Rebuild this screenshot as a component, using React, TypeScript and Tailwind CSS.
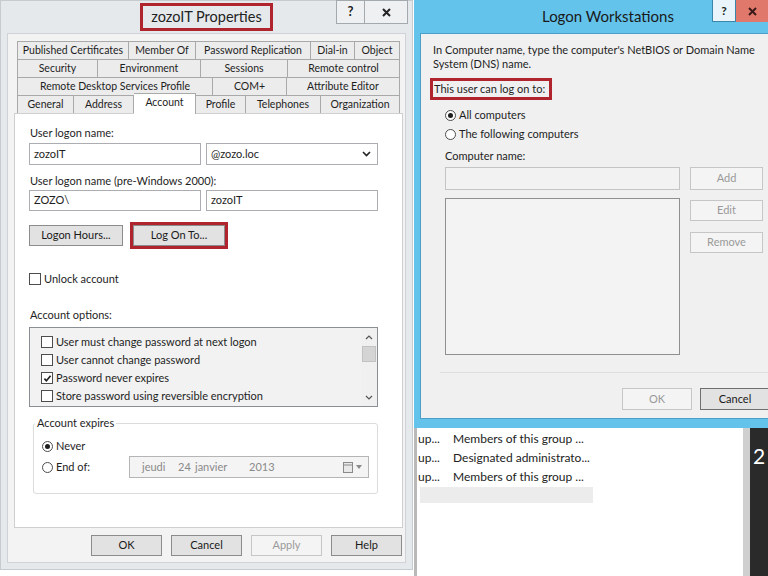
import React from "react";

const tabRows: [string, number][][] = [
  [["Published Certificates", 112], ["Member Of", 67], ["Password Replication", 115], ["Dial-in", 44], ["Object", 45]],
  [["Security", 81], ["Environment", 103], ["Sessions", 87], ["Remote control", 112]],
  [["Remote Desktop Services Profile", 196], ["COM+", 74], ["Attribute Editor", 113]],
  [["General", 57], ["Address", 60], ["Account", 62], ["Profile", 50], ["Telephones", 75], ["Organization", 79]],
];

const accountOptions = [
  { label: "User must change password at next logon", checked: false },
  { label: "User cannot change password", checked: false },
  { label: "Password never expires", checked: true },
  { label: "Store password using reversible encryption", checked: false },
];

const groupRows = ["Members of this group ...", "Designated administrato...", "Members of this group ..."];

function Check({ checked }: { checked?: boolean }) {
  return (
    <span className="w-[12px] h-[12px] border border-[#4d4d4d] bg-white flex items-center justify-center shrink-0">
      {checked && (
        <svg width="9" height="9" viewBox="0 0 9 9">
          <path d="M1.4 4.6 L3.4 6.8 L7.6 1.8" fill="none" stroke="#1e1e1e" strokeWidth="1.6" />
        </svg>
      )}
    </span>
  );
}

function Radio({ checked }: { checked?: boolean }) {
  return (
    <span className="w-[11px] h-[11px] rounded-full border border-[#4d4d4d] bg-white flex items-center justify-center shrink-0">
      {checked && <span className="w-[5px] h-[5px] rounded-full bg-[#1e1e1e]" />}
    </span>
  );
}

function Btn({ label, className = "", disabled }: { label: string; className?: string; disabled?: boolean }) {
  return (
    <div
      className={`h-[21px] flex items-center justify-center border text-[11px] shrink-0 ${
        disabled ? "border-[#c6c6c6] bg-[#f4f4f4] text-[#9a9a9a]" : "border-[#8c8c8c] bg-[#e2e2e2] text-[#1a1a1a]"
      } ${className}`}
    >
      {label}
    </div>
  );
}

function CloseX({ color }: { color: string }) {
  return (
    <svg width="9" height="9" viewBox="0 0 9 9">
      <path d="M1 1 L8 8 M8 1 L1 8" stroke={color} strokeWidth="2" />
    </svg>
  );
}

function PropertiesDialog() {
  return (
    <div className="w-[413px] h-[570px] bg-[#e6e9ec] border border-[#c6cbd0] flex flex-col px-[6px] pb-[6px]">
      <div className="h-[32px] relative flex items-center justify-center">
        <div className="border-[3px] border-[#b0252d] h-[28px] px-[8px] flex items-center text-[14.5px] text-[#222]">
          zozoIT Properties
        </div>
        <div className="absolute top-[-1px] right-[-2px] flex">
          <div className="w-[29px] h-[24px] border border-[#a4a9ae] bg-[#eef0f2] flex items-center justify-center text-[13px] font-bold text-[#222]">
            ?
          </div>
          <div className="w-[43px] h-[24px] border border-l-0 border-[#a4a9ae] bg-[#eef0f2] flex items-center justify-center">
            <CloseX color="#222" />
          </div>
        </div>
      </div>

      <div className="flex-1 bg-[#f3f3f3] border border-[#cfd3d7] pt-[7px] pl-[6px] pr-[2px] flex flex-col">
        <div className="ml-[3px] w-[383px] flex flex-col">
          {tabRows.map((row, i) => (
            <div key={i} className={`flex h-[18px] ${i === 3 ? "relative z-10 items-end" : ""}`}>
              {row.map(([label, w], j) => {
                const sel = label === "Account";
                return (
                  <div
                    key={label}
                    style={{ width: w }}
                    className={`flex items-center justify-center text-[10.5px] text-[#1e1e1e] whitespace-nowrap border-t border-r border-[#a9a9a9] ${
                      j === 0 ? "border-l" : ""
                    } ${sel ? "h-[21px] -mb-px bg-white pb-[2px]" : "h-full bg-[#ececec]"}`}
                  >
                    {label}
                  </div>
                );
              })}
            </div>
          ))}
        </div>

        <div className="h-[415px] bg-white border border-[#cfcfcf] pl-[14px] flex flex-col text-[11px] text-[#1e1e1e]">
          <div className="mt-[11px] leading-[16px] ml-px">User logon name:</div>
          <div className="mt-[2px] flex gap-[5px]">
            <div className="w-[172px] h-[22px] border border-[#abadb3] flex items-center pl-[4px]">zozoIT</div>
            <div className="w-[172px] h-[22px] border border-[#abadb3] flex items-center pl-[4px] pr-[6px]">
              <span>@zozo.loc</span>
              <svg className="ml-auto" width="9" height="6" viewBox="0 0 9 6">
                <path d="M1 1 L4.5 4.5 L8 1" fill="none" stroke="#222" strokeWidth="1.6" />
              </svg>
            </div>
          </div>
          <div className="mt-[8px] leading-[16px] ml-px">User logon name (pre-Windows 2000):</div>
          <div className="mt-px flex gap-[5px]">
            <div className="w-[172px] h-[21px] border border-[#abadb3] flex items-center pl-[4px]">ZOZO\</div>
            <div className="w-[172px] h-[21px] border border-[#abadb3] flex items-center pl-[4px]">zozoIT</div>
          </div>
          <div className="mt-[14px] flex items-center">
            <Btn label="Logon Hours..." className="w-[94px]" />
            <Btn label="Log On To..." className="w-[92px] ml-[10px] outline-[3px] outline-[#b0252d]" />
          </div>
          <div className="mt-[25px] h-[16px] flex items-center gap-[3px]">
            <Check />
            <span>Unlock account</span>
          </div>
          <div className="mt-[20px] leading-[16px] ml-px">Account options:</div>
          <div className="mt-[4px] w-[349px] h-[80px] border border-[#8a8f96] bg-[#f2f2f2] flex">
            <div className="flex-1 pt-[5px] pl-[11px] flex flex-col">
              {accountOptions.map((o) => (
                <div key={o.label} className="h-[18px] flex items-center gap-[3px]">
                  <Check checked={o.checked} />
                  <span>{o.label}</span>
                </div>
              ))}
            </div>
            <div className="w-[16px] bg-[#f0f0f0] flex flex-col items-center">
              <div className="h-[18px] flex items-center">
                <svg width="8" height="5" viewBox="0 0 8 5">
                  <path d="M1 4 L4 1 L7 4" fill="none" stroke="#555" strokeWidth="1.2" />
                </svg>
              </div>
              <div className="w-[14px] h-[16px] bg-[#d4d4d4] border border-[#c2c2c2]" />
              <div className="flex-1" />
              <div className="h-[18px] flex items-center">
                <svg width="8" height="5" viewBox="0 0 8 5">
                  <path d="M1 1 L4 4 L7 1" fill="none" stroke="#555" strokeWidth="1.2" />
                </svg>
              </div>
            </div>
          </div>

          <fieldset className="mt-[8px] ml-[4px] w-[345px] border border-[#dcdcdc] rounded-[3px] pl-px pb-[15px]">
            <legend className="px-[2px] leading-[16px]">Account expires</legend>
            <div className="pl-[7px] flex flex-col">
              <div className="mt-[7px] h-[16px] flex items-center gap-[3px]">
                <Radio checked />
                <span>Never</span>
              </div>
              <div className="mt-[2px] h-[22px] flex items-center gap-[3px]">
                <Radio />
                <span className="w-[70px]">End of:</span>
                <div className="w-[240px] h-[22px] border border-[#b5b5b5] bg-[#f4f4f4] flex items-center text-[#8a8a8a] pl-[12px]">
                  <span className="w-[36px]">jeudi</span>
                  <span className="w-[17px]">24</span>
                  <span className="w-[54px]">janvier</span>
                  <span>2013</span>
                  <span className="ml-auto mr-[6px] flex items-center gap-[3px]">
                    <svg width="10" height="12" viewBox="0 0 10 12">
                      <rect x="0.5" y="1.5" width="9" height="10" fill="#e8e8e8" stroke="#8a8a8a" />
                      <path d="M0.5 4 H9.5" stroke="#8a8a8a" />
                    </svg>
                    <svg width="6" height="4" viewBox="0 0 6 4">
                      <path d="M0 0 L3 4 L6 0 Z" fill="#8a8a8a" />
                    </svg>
                  </span>
                </div>
              </div>
            </div>
          </fieldset>
        </div>

        <div className="mt-[7px] flex justify-end gap-[9px] pr-px">
          <Btn label="OK" className="w-[71px]" />
          <Btn label="Cancel" className="w-[71px]" />
          <Btn label="Apply" className="w-[71px]" disabled />
          <Btn label="Help" className="w-[71px]" />
        </div>
      </div>
    </div>
  );
}

function WorkstationsDialog() {
  return (
    <div className="ml-px h-[428px] bg-[#63c3ea] pl-[6px] pb-[9px] flex flex-col overflow-hidden">
      <div className="h-[33px] relative flex items-center pl-[122px] text-[15px] text-[#1a1a1a]">
        Logon Workstations
        <div className="absolute top-0 right-0 flex">
          <div className="w-[24px] h-[22px] border border-[#3a86ab] border-t-0 bg-[#e9f5fb] flex items-center justify-center text-[12px] font-bold text-[#222]">
            ?
          </div>
          <div className="w-[32px] h-[22px] bg-[#e0786c] flex items-center justify-center">
            <CloseX color="#3a1a1a" />
          </div>
        </div>
      </div>

      <div className="flex-1 bg-[#f0f0f0] border-l border-t border-b border-[#4a9fc8] pl-[12px] flex flex-col text-[11px] text-[#1e1e1e]">
        <div className="pt-[9px] leading-[14px]">
          <div>In Computer name, type the computer's NetBIOS or Domain Name</div>
          <div>System (DNS) name.</div>
        </div>
        <div className="mt-[7px] -ml-[3px] w-[122px] h-[22px] border-[3px] border-[#b0252d] flex items-center pl-px">
          This user can log on to:
        </div>
        <div className="mt-[7px] ml-[12px] h-[16px] flex items-center gap-[3px]">
          <Radio checked />
          <span>All computers</span>
        </div>
        <div className="mt-[3px] ml-[12px] h-[16px] flex items-center gap-[3px]">
          <Radio />
          <span>The following computers</span>
        </div>
        <div className="mt-[6px] ml-[12px] leading-[16px]">Computer name:</div>
        <div className="mt-[3px] ml-[12px] flex gap-[10px]">
          <div className="w-[235px] h-[23px] border border-[#c4c4c4] bg-[#f2f2f2]" />
          <Btn label="Add" className="w-[73px] h-[23px]" disabled />
        </div>
        <div className="mt-[8px] ml-[12px] flex gap-[10px]">
          <div className="w-[235px] h-[157px] border border-[#8f8f8f] bg-[#f3f3f3]" />
          <div className="flex flex-col">
            <Btn label="Edit" className="w-[73px] mt-[2px]" disabled />
            <Btn label="Remove" className="w-[73px] mt-[11px]" disabled />
          </div>
        </div>
        <div className="mt-[17px] ml-[7px] h-px bg-[#dedede]" />
        <div className="mt-[15px] ml-[189px] flex gap-[8px]">
          <Btn label="OK" className="w-[70px] h-[22px]" disabled />
          <Btn label="Cancel" className="w-[70px] h-[22px] border-[#707070] bg-[#dadada]" />
        </div>
      </div>
    </div>
  );
}

export default function App() {
  return (
    <div className="w-[768px] h-[576px] bg-white flex overflow-hidden font-['Lato',sans-serif]">
      <div className="w-[413px] shrink-0 flex flex-col">
        <PropertiesDialog />
      </div>
      <div className="w-[355px] shrink-0 flex flex-col">
        <WorkstationsDialog />
        <div className="flex-1 flex bg-white">
          <div className="w-[3px] ml-px bg-[#b9b9b9]" />
          <div className="flex-1 pt-px flex flex-col text-[12px] text-[#222]">
            {groupRows.map((r, i) => (
              <div key={i} className="h-[19px] flex items-center">
                <span className="w-[36px] pl-px">up...</span>
                <span>{r}</span>
              </div>
            ))}
            <div className="mt-px ml-[3px] w-[173px] h-[16px] bg-[#ececec]" />
          </div>
          <div className="w-[7px] bg-[#cfcfcf]" />
          <div className="w-[18px] bg-[#2a2a2a] text-white text-[21px] leading-[28px] pl-[3px] pt-[14px]">2</div>
        </div>
      </div>
    </div>
  );
}
